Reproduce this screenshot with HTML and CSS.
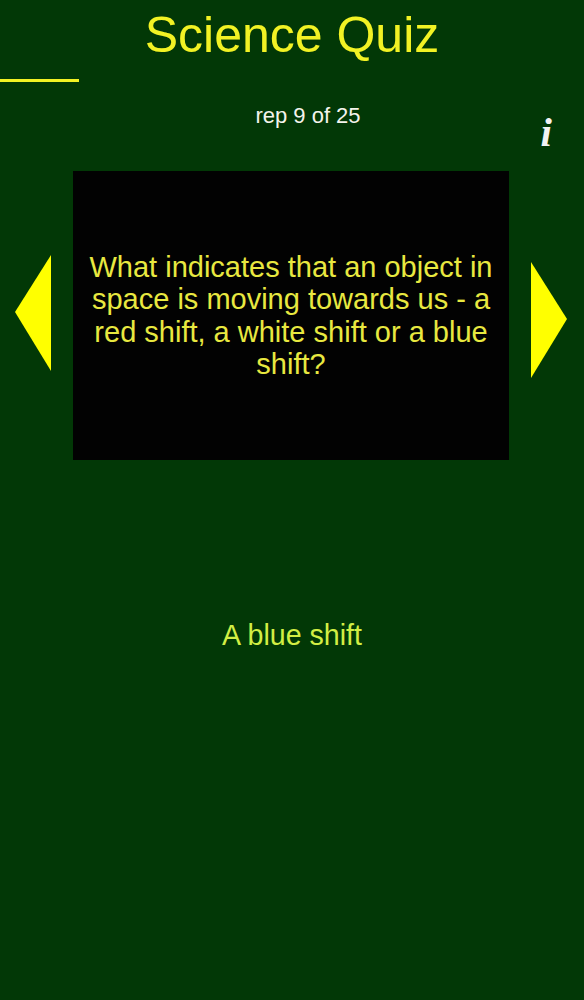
FILE: index.html
```html
<!DOCTYPE html>
<html>
<head>
<meta charset="utf-8">
<link rel="stylesheet" href="styles.css">
</head>
<body>
<div class="screen">
  <h1 class="title">Science Quiz</h1>
  <div class="rule"></div>
  <div class="status">
    <span class="progress">rep 9 of 25</span>
    <span class="info">i</span>
  </div>
  <div class="stage">
    <svg class="arrow arrow-left" width="36" height="116" viewBox="0 0 36 116"><polygon points="36,0 36,116 0,57" fill="#ffff00"/></svg>
    <div class="card">
      <p class="question">What indicates that an object in space is moving towards us - a red shift, a white shift or a blue shift?</p>
    </div>
    <svg class="arrow arrow-right" width="36" height="116" viewBox="0 0 36 116"><polygon points="0,0 0,116 36,57" fill="#ffff00"/></svg>
  </div>
  <div class="answer">A blue shift</div>
</div>
</body>
</html>
```
FILE: styles.css
```css
html, body {
  margin: 0;
  padding: 0;
  background: #023806;
}
.screen {
  width: 584px;
  height: 1000px;
  background: #023806;
  font-family: "Liberation Sans", Arial, sans-serif;
  overflow: hidden;
}
.title {
  margin: 0;
  padding-top: 6px;
  height: 58px;
  line-height: 58px;
  font-size: 50px;
  font-weight: normal;
  text-align: center;
  color: #f2f224;
}
.rule {
  width: 79px;
  height: 3px;
  margin-top: 15px;
  background: #f2f224;
}
.status {
  position: relative;
  margin-top: 21px;
  height: 26px;
  display: flex;
  justify-content: center;
}
.progress {
  padding-left: 32px;
  font-size: 22px;
  line-height: 26px;
  color: #f4f4ec;
}
.info {
  position: absolute;
  right: 32px;
  top: 9px;
  font-family: "Liberation Serif", "Times New Roman", serif;
  font-style: italic;
  font-weight: bold;
  font-size: 41px;
  line-height: 41px;
  color: #f2f2f2;
}
.stage {
  margin-top: 42px;
  display: grid;
  grid-template-columns: 73px 436px 75px;
  height: 289px;
}
.arrow {
  align-self: center;
}
.arrow-left {
  justify-self: end;
  margin-right: 22px;
  margin-bottom: 6px;
}
.arrow-right {
  justify-self: start;
  margin-left: 22px;
  margin-top: 8px;
}
.card {
  background: #020202;
  display: flex;
  align-items: center;
  justify-content: center;
  padding: 0 12px;
}
.question {
  margin: 0;
  font-size: 29px;
  line-height: 32.5px;
  text-align: center;
  color: #e8e840;
}
.answer {
  margin-top: 158px;
  font-size: 28.6px;
  line-height: 34px;
  text-align: center;
  color: #d2ee44;
}
```
